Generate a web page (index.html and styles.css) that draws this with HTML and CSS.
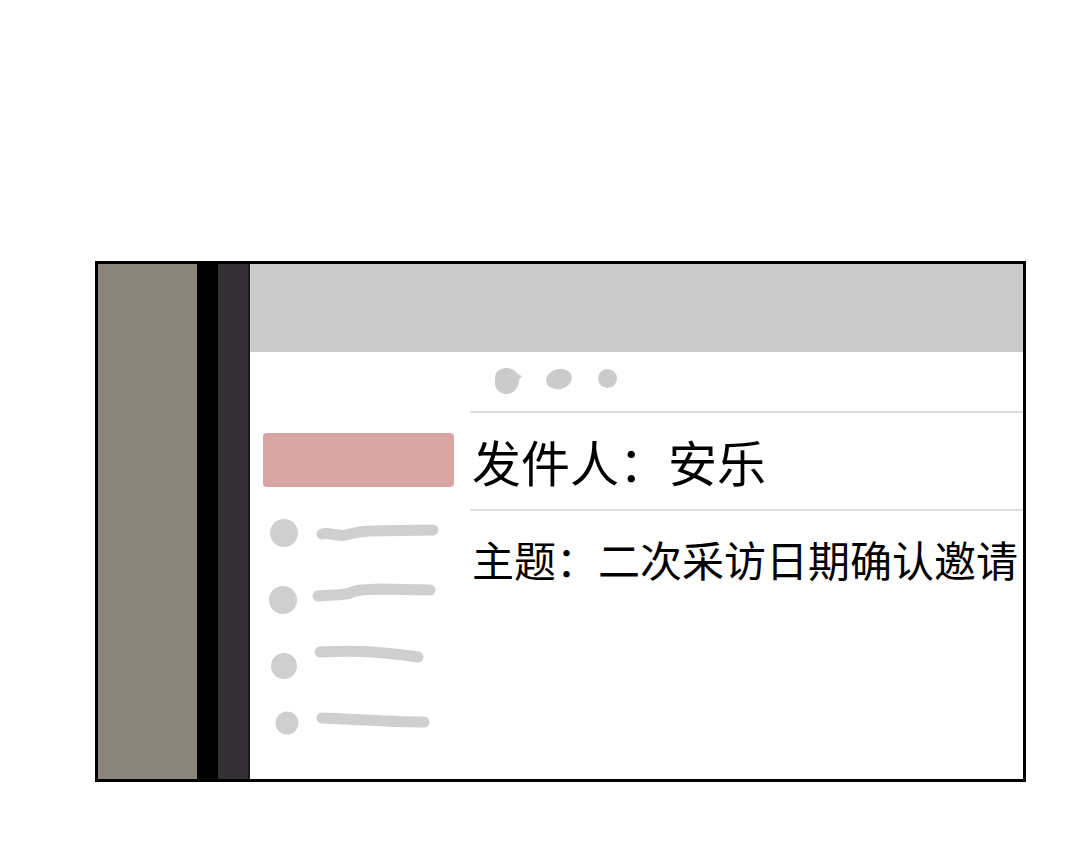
FILE: index.html
```html
<!DOCTYPE html>
<html lang="zh-CN">
<head>
  <meta charset="UTF-8">
  <meta name="viewport" content="width=device-width, initial-scale=1.0">
  <title>邮件</title>
  <link rel="stylesheet" href="styles.css">
</head>
<body>
  <div class="laptop">
    <div class="cover"></div>
    <div class="spine"></div>
    <div class="bezel"></div>
    <div class="screen">
      <div class="toolbar"></div>
      <div class="window">
        <div class="sidebar">
          <div class="compose"></div>
          <!-- hand-drawn folder list -->
          <svg class="folders" width="220" height="250" viewBox="0 0 220 250">
            <g fill="#cfcfcf">
              <circle cx="34" cy="33" r="14"/>
              <circle cx="33" cy="100" r="14"/>
              <circle cx="34" cy="166" r="13"/>
              <circle cx="37" cy="223" r="11.5"/>
            </g>
            <g fill="none" stroke="#cfcfcf" stroke-width="11" stroke-linecap="round">
              <path d="M72,34 C80,32 88,37 96,35 C104,33 108,31 120,31 L183,30"/>
              <path d="M68,96 C80,94 92,96 100,93 C108,89 115,90 130,89 L180,90"/>
              <path d="M70,152 C100,150 130,151 168,157"/>
              <path d="M72,218 C100,219 140,222 174,222"/>
            </g>
          </svg>
        </div>
        <div class="mail">
          <div class="mail-actions">
            <svg width="200" height="60" viewBox="0 0 200 60">
              <g fill="#cbcbcb">
                <path d="M27,20 C31,15 41,15 45,19 C47,21 48,23 52,24 C50,27 48,28 49,30 C48,37 42,43 35,42 C28,41 24,35 25,29 C25,25 25,22 27,20 Z"/>
                <ellipse cx="89" cy="27" rx="13" ry="10" transform="rotate(-14 89 27)"/>
                <circle cx="137.5" cy="26.5" r="9.5"/>
              </g>
            </svg>
          </div>
          <div class="mail-from">发件人：安乐</div>
          <div class="mail-subject">主题：二次采访日期确认邀请</div>
        </div>
      </div>
    </div>
  </div>
</body>
</html>
```

FILE: styles.css
```css
body {
  margin: 0;
  padding: 0;
  background: #fff;
  font-family: "Noto Sans CJK SC", "Noto Sans", sans-serif;
}

.laptop {
  display: flex;
  width: 925px;
  height: 515px;
  margin: 261px 0 0 95px;
  border: 3px solid #000;
}

.cover {
  width: 99px;
  background: #8c857d;
}

.spine {
  width: 21px;
  background: #000;
}

.bezel {
  width: 30px;
  background: #333133;
  border-right: 2px solid #1b1b1b;
}

.screen {
  flex: 1;
  display: flex;
  flex-direction: column;
  background: #fff;
  overflow: hidden;
}

.toolbar {
  height: 88px;
  background: #cbcbcb;
}

.window {
  flex: 1;
  display: flex;
}

.sidebar {
  width: 220px;
  padding-top: 81px;
}

.compose {
  width: 191px;
  height: 54px;
  margin-left: 13px;
  border-radius: 4px;
  background: #d8a5a3;
}

.folders {
  display: block;
  margin-top: 13px;
}

.mail {
  flex: 1;
  min-width: 0;
}

.mail-actions {
  height: 59px;
  border-bottom: 2px solid #dedede;
}

.mail-actions svg {
  display: block;
}

.mail-from {
  height: 96px;
  line-height: 96px;
  padding-left: 2px;
  font-size: 49px;
  color: #000;
  border-bottom: 2px solid #dedede;
  white-space: nowrap;
}

.mail-subject {
  padding: 20px 0 0 2px;
  font-size: 42px;
  line-height: 56px;
  color: #000;
  white-space: nowrap;
}
```
